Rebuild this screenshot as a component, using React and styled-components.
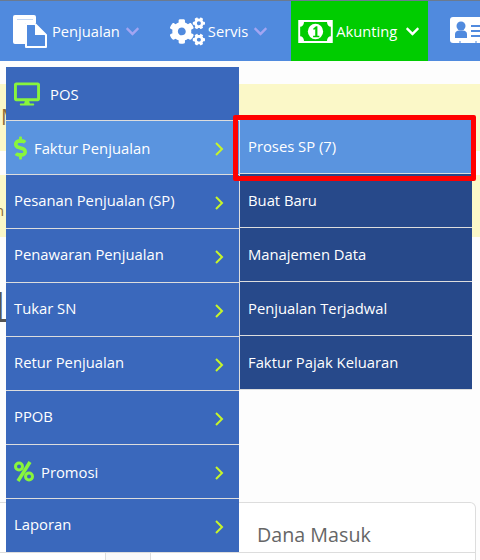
import React from 'react'
import styled, { createGlobalStyle } from 'styled-components'
import { FaCogs, FaChevronDown, FaDesktop, FaDollarSign } from 'react-icons/fa'

const GlobalStyle = createGlobalStyle`
  html, body {
    margin: 0;
    padding: 0;
    background: #fdfdfd;
    overflow: hidden;
  }
  body {
    font-family: "Open Sans", "Noto Sans", sans-serif;
    font-size: 14.8px;
  }
`;

const Page = styled.div`
  position: relative;
  width: 480px;
  height: 560px;
  overflow: hidden;
  background: #fdfdfd;
`;

const Navbar = styled.div`
  display: flex;
  align-items: stretch;
  height: 60px;
  padding-left: 13px;
  background-color: #508ade;
  border-top: 1px solid #6b7a90;
  white-space: nowrap;
`;

const NavItem = styled.div`
  display: flex;
  align-items: center;
  flex: none;
  padding: ${({ $active }) => ($active ? '0 8px 0 7px' : '0')};
  margin-right: ${({ $gap }) => $gap || 0}px;
  background-color: ${({ $active }) => ($active ? '#00cc00' : 'transparent')};
  color: #fff;
  font-size: 14.7px;
`;

const NavIcon = styled.span`
  display: flex;
  margin-right: ${({ $gap }) => $gap}px;
`;

const NavCaret = styled(FaChevronDown)`
  margin-left: ${({ $active }) => ($active ? 8 : 5)}px;
  font-size: 15px;
  color: ${({ $active }) => ($active ? '#fff' : '#a3a5f2')};
`;

const Content = styled.div`
  padding-top: 23px;
`;

const Alert = styled.div`
  height: ${({ $height }) => $height}px;
  margin-bottom: ${({ $below }) => $below || 0}px;
  padding: ${({ $top }) => $top}px 1px 0;
  box-sizing: border-box;
  background-color: #fbf8c8;
  color: #8a6d3b;
  font-size: ${({ $size }) => $size}px;
  line-height: ${({ $line }) => $line}px;
  text-indent: ${({ $indent }) => $indent || 0}px;
`;

const Heading = styled.h1`
  margin: 44px 0 0;
  height: 50px;
  color: #555;
  font-size: 42px;
  font-weight: 400;
  line-height: 50px;
  text-indent: -6px;
`;

const Card = styled.div`
  margin: 171px 4px 0 0;
  background-color: #fff;
  border: 1px solid #ddd;
  border-left: none;
  border-radius: 0 6px 0 0;
`;

const CardTitle = styled.div`
  height: 49px;
  padding: 19px 0 0 257px;
  box-sizing: border-box;
  color: #666;
  font-size: 19.7px;
  line-height: 26px;
`;

const TableHead = styled.div`
  display: flex;
  height: 30px;
  border-top: 1px solid #ddd;
`;

const HeadCell = styled.div`
  flex: none;
  width: ${({ $width }) => $width}px;
  box-sizing: border-box;
  background-color: ${({ $shaded }) => ($shaded ? '#f9f9f9' : 'transparent')};
  border-right: 1px solid #ddd;
`;

const MenuWrap = styled.div`
  position: absolute;
  top: 67px;
  left: 6px;
  display: flex;
  align-items: flex-start;
`;

const MainMenu = styled.div`
  display: flex;
  flex-direction: column;
  width: 233px;
`;

const SubMenu = styled.div`
  display: flex;
  flex-direction: column;
  width: 233px;
  margin-top: 53px;
  box-sizing: border-box;
  border-left: 1px solid #ddd;
`;

const MenuRow = styled.div`
  display: flex;
  align-items: center;
  height: 54px;
  padding: 0 15px 0 8px;
  box-sizing: border-box;
  border-bottom: 1px solid #ddd;
  background-color: ${({ $selected }) => ($selected ? '#5a94df' : '#3a68bc')};
  color: #fff;
  font-size: 14.8px;
  &:last-child {
    height: 53px;
    border-bottom: none;
  }
`;

const SubRow = styled(MenuRow)`
  background-color: ${({ $selected }) => ($selected ? '#5a94df' : '#27498a')};
  &:last-child {
    height: 54px;
    border-bottom: 1px solid #ddd;
  }
`;

const RowLabel = styled.span`
  flex: 1;
  padding-bottom: ${({ $raise }) => $raise || 0}px;
`;

const RowIcon = styled.span`
  display: flex;
  margin-right: ${({ $gap }) => $gap}px;
  color: #88f53c;
`;

const Arrow = styled.svg`
  width: 10px;
  height: 14px;
  margin-top: 2px;
  fill: none;
  stroke: #c6f52a;
  stroke-width: 2;
`;

const Annotation = styled.div`
  position: absolute;
  top: 115px;
  left: 233px;
  width: 243px;
  height: 66px;
  box-sizing: border-box;
  border: 5px solid #ff0000;
  border-radius: 2px;
`;

const FilesIcon = () => (
  <svg width="34" height="33" viewBox="0 0 34 33">
    <path d="M2 0h19a2 2 0 0 1 2 2v6H14a2 2 0 0 0-2 2v19H2a2 2 0 0 1-2-2V2a2 2 0 0 1 2-2z" fill="#fff" />
    <path d="M4 4h16v1H4z" fill="#c4d7f3" />
    <path d="M13 9h9l11 11v12H13z" fill="#508ade" stroke="#fff" strokeWidth="2" strokeLinejoin="round" />
    <path d="M22 9l11 11H22z" fill="#fff" />
  </svg>
)

const MoneyIcon = () => (
  <svg width="35" height="23" viewBox="0 0 36 24">
    <path d="M0 0h36v24H0z" fill="#fff" />
    <path d="M6 2h24c0 3 2 5 4 5v10c-2 0-4 2-4 5H6c0-3-2-5-4-5V7c2 0 4-2 4-5z" fill="#00cc00" />
    <circle cx="18" cy="12" r="8" fill="#fff" />
    <path d="M15.500 9l3-2.500h1.500v10h2v1.500h-6.500v-1.500h2.200v-7l-1.400 1z" fill="#00cc00" />
  </svg>
)

const ContactIcon = () => (
  <svg width="36" height="28" viewBox="0 0 36 28">
    <rect x="0" y="0" width="36" height="26" rx="3" fill="#fff" />
    <path d="M10 24v4M26 24v4" stroke="#508ade" strokeWidth="1" />
    <circle cx="11" cy="9" r="4.500" fill="#508ade" />
    <path d="M5 21v-4c0-2 2-3.500 4-3.500h4c2 0 4 1.500 4 3.500v4z" fill="#508ade" />
    <path d="M21 9h15M21 14h15M21 19h15" stroke="#508ade" strokeWidth="2" />
  </svg>
)

const PercentIcon = () => (
  <svg width="20" height="21" viewBox="0 0 20 21" fill="none" stroke="#88f53c" strokeWidth="3">
    <circle cx="5" cy="5.500" r="3.500" />
    <circle cx="15" cy="15.500" r="3.500" />
    <path d="M16 1L4 20" strokeWidth="3.500" />
  </svg>
)

const ChevronArrow = () => (
  <Arrow viewBox="0 0 10 14">
    <path d="M2 1l6 6-6 6" />
  </Arrow>
)

const mainItems = [
  { label: 'POS', icon: <FaDesktop size={26} />, gap: 10, noArrow: true },
  { label: 'Faktur Penjualan', icon: <FaDollarSign size={24} style={{ width: 13 }} />, gap: 7, selected: true },
  { label: 'Pesanan Penjualan (SP)' },
  { label: 'Penawaran Penjualan' },
  { label: 'Tukar SN' },
  { label: 'Retur Penjualan' },
  { label: 'PPOB' },
  { label: 'Promosi', icon: <PercentIcon />, gap: 7 },
  { label: 'Laporan' },
]

const subItems = ['Proses SP (7)', 'Buat Baru', 'Manajemen Data', 'Penjualan Terjadwal', 'Faktur Pajak Keluaran']

const App = () => {
  return (
    <Page>
      <GlobalStyle />
      <Navbar>
        <NavItem $gap={30}>
          <NavIcon $gap={5}><FilesIcon /></NavIcon>
          Penjualan
          <NavCaret />
        </NavItem>
        <NavItem $gap={23}>
          <NavIcon $gap={3}><FaCogs size={35} /></NavIcon>
          Servis
          <NavCaret />
        </NavItem>
        <NavItem $active $gap={22}>
          <NavIcon $gap={3}><MoneyIcon /></NavIcon>
          Akunting
          <NavCaret $active />
        </NavItem>
        <NavItem>
          <NavIcon $gap={0}><ContactIcon /></NavIcon>
        </NavItem>
      </Navbar>
      <Content>
        <Alert $height={67} $below={24} $top={19} $size={21} $line={28}>M</Alert>
        <Alert $height={62} $top={25} $size={15} $line={20} $indent={-6}>n</Alert>
        <Heading>L</Heading>
        <Card>
          <CardTitle>Dana Masuk</CardTitle>
          <TableHead>
            <HeadCell $width={106} />
            <HeadCell $width={45} $shaded />
          </TableHead>
        </Card>
      </Content>
      <MenuWrap>
        <MainMenu>
          {mainItems.map((item) => (
            <MenuRow key={item.label} $selected={item.selected}>
              {item.icon && <RowIcon $gap={item.gap}>{item.icon}</RowIcon>}
              <RowLabel $raise={item.icon ? 0 : 3}>{item.label}</RowLabel>
              {!item.noArrow && <ChevronArrow />}
            </MenuRow>
          ))}
        </MainMenu>
        <SubMenu>
          {subItems.map((label, i) => (
            <SubRow key={label} $selected={i === 0}>
              <RowLabel $raise={1}>{label}</RowLabel>
            </SubRow>
          ))}
        </SubMenu>
      </MenuWrap>
      <Annotation />
    </Page>
  )
}

export default App
